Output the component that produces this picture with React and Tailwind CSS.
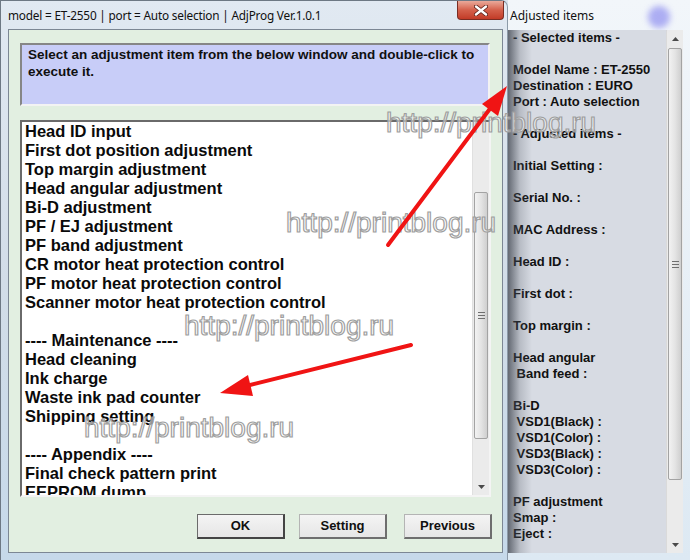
import React from 'react';

const listItems = [
  'Head ID input',
  'First dot position adjustment',
  'Top margin adjustment',
  'Head angular adjustment',
  'Bi-D adjustment',
  'PF / EJ adjustment',
  'PF band adjustment',
  'CR motor heat protection control',
  'PF motor heat protection control',
  'Scanner motor heat protection control',
  '',
  '---- Maintenance ----',
  'Head cleaning',
  'Ink charge',
  'Waste ink pad counter',
  'Shipping setting',
  '',
  '---- Appendix ----',
  'Final check pattern print',
  'EEPROM dump',
];

const adjusted = [
  '- Selected items -',
  '',
  'Model Name : ET-2550',
  'Destination : EURO',
  'Port : Auto selection',
  '',
  '- Adjusted items -',
  '',
  'Initial Setting :',
  '',
  'Serial No. :',
  '',
  'MAC Address :',
  '',
  'Head ID :',
  '',
  'First dot :',
  '',
  'Top margin :',
  '',
  'Head angular',
  ' Band feed :',
  '',
  'Bi-D',
  ' VSD1(Black) :',
  ' VSD1(Color) :',
  ' VSD3(Black) :',
  ' VSD3(Color) :',
  '',
  'PF adjustment',
  'Smap :',
  'Eject :',
];

function Grip() {
  return (
    <div className="flex flex-col gap-[2px] items-center">
      <div className="w-[7px] h-px bg-[#6f6f6f]" />
      <div className="w-[7px] h-px bg-[#6f6f6f]" />
      <div className="w-[7px] h-px bg-[#6f6f6f]" />
    </div>
  );
}

function Arrow({ up }) {
  return (
    <svg width="7" height="4" viewBox="0 0 7 4">
      {up ? <path d="M0 4 L3.5 0 L7 4 Z" fill="#4a4a4a" /> : <path d="M0 0 L7 0 L3.5 4 Z" fill="#4a4a4a" />}
    </svg>
  );
}

function Thumb({ className }) {
  return (
    <div className={`mx-[1px] rounded-[2px] border border-[#a3a3a3] bg-gradient-to-r from-[#f2f2f2] via-[#e4e4e4] to-[#cfcfcf] flex items-center justify-center ${className}`}>
      <Grip />
    </div>
  );
}

function Button({ children, primary, className = '' }) {
  return (
    <button
      className={`w-[88px] h-[25px] text-[13px] font-bold text-[#101010] bg-gradient-to-b from-[#f4f4f4] to-[#e6e6e6] border ${
        primary
          ? 'border-[#6b6b6b] border-b-2 border-r-2 border-b-[#444] border-r-[#444]'
          : 'border-[#b4b4b4] border-b-2 border-r-2 border-b-[#6e6e6e] border-r-[#6e6e6e]'
      } ${className}`}
    >
      {children}
    </button>
  );
}

const wm = 'absolute text-[28px] leading-[28px] text-[rgba(255,255,255,0.55)] [-webkit-text-stroke:1.2px_#9e9e9e] whitespace-nowrap';

export default function App() {
  return (
    <div className="relative w-[690px] h-[560px] overflow-hidden flex bg-[#d9e4ee] font-['Liberation_Sans',Arial,sans-serif]">
      {/* left dialog */}
      <div className="relative z-10 w-[508px] h-[560px] flex flex-col bg-gradient-to-b from-[#e1e9f2] via-[#d2dde8] to-[#c6d9ea] border-l border-t border-[#6d7884] rounded-tr-[7px] border-r border-r-[#8c9aa8]">
        <div className="h-[28px] flex items-start pl-[7px] relative">
          <span className="mt-[6px] text-[11.8px] text-[#101010] font-['Noto_Sans',sans-serif] tracking-[-0.2px]">
            model = ET-2550 | port = Auto selection | AdjProg Ver.1.0.1
          </span>
          <div className="ml-auto mr-[3px] w-[47px] h-[19px] rounded-b-[4px] border border-t-0 border-[#7a2c22] bg-gradient-to-b from-[#e9a99a] via-[#d4604b] to-[#c23a26] flex items-center justify-center">
            <svg width="14" height="11" viewBox="0 0 14 11">
              <path d="M2 1.5 L12 9.5 M12 1.5 L2 9.5" stroke="#5a1e16" strokeWidth="4" strokeLinecap="round" />
              <path d="M2 1.5 L12 9.5 M12 1.5 L2 9.5" stroke="#ffffff" strokeWidth="2.4" strokeLinecap="round" />
            </svg>
          </div>
        </div>

        <div className="ml-[7px] mr-[4px] h-[524px] border border-[#7c8794] bg-[#e2efe1] flex flex-col pl-[11px] pr-[10px]">
          <div className="mt-[13px] h-[63px] mr-[2px] border-2 border-t-[#868686] border-l-[#868686] border-b-[#f3f3f3] border-r-[#f3f3f3] bg-[#c8cdf8] pl-[6px] pr-[4px] pt-[2px] text-[13.5px] leading-[16.5px] font-bold text-[#101010]">
            Select an adjustment item from the below window and double-click to execute it.
          </div>

          <div className="mt-[14px] h-[377px] mr-[1px] border-2 border-t-[#6a6a6a] border-l-[#6a6a6a] border-b-[#f4f4f4] border-r-[#f4f4f4] bg-white flex">
            <div className="flex-1 overflow-hidden pl-[3px]">
              {listItems.map((t, i) => (
                <div key={i} className="h-[19px] text-[16.5px] leading-[19px] font-bold text-[#0a0a0a] whitespace-nowrap">
                  {t}
                </div>
              ))}
            </div>
            <div className="w-[17px] bg-[#ebebeb] border-l border-[#e0e0e0] flex flex-col">
              <Thumb className="mt-[70px] h-[247px]" />
              <div className="flex-1" />
              <div className="h-[17px] flex items-center justify-center">
                <Arrow />
              </div>
            </div>
          </div>

          <div className="mt-[17px] flex justify-end">
            <Button primary>OK</Button>
            <Button className="ml-[14px]">Setting</Button>
            <Button className="ml-[17px]">Previous</Button>
          </div>
        </div>
      </div>

      {/* right window */}
      <div className="relative flex-1 h-[560px] flex flex-col bg-gradient-to-b from-[#f2f6fa] to-[#dde9f3]">
        <div className="h-[30px] relative flex items-start">
          <span className="mt-[7px] ml-[2px] text-[12px] text-[#101010] font-['Noto_Sans',sans-serif]">Adjusted items</span>
          <div className="absolute left-[140px] top-[6px] w-[22px] h-[22px] rounded-full bg-[#8f8ff0] opacity-70 blur-[3px]" />
        </div>
        <div className="h-[523px] flex">
          <div className="relative w-[158px] bg-[#d7dbe3] pl-[5px] overflow-hidden">
            {adjusted.map((t, i) => (
              <div key={i} className="h-[16px] text-[13px] leading-[16px] font-bold text-[#111] whitespace-pre">
                {t}
              </div>
            ))}
            <div className="absolute left-0 top-0 bottom-0 w-[24px] bg-gradient-to-r from-[rgba(60,66,76,0.75)] via-[rgba(90,96,106,0.25)] to-transparent" />
          </div>
          <div className="w-[17px] bg-[#ebebeb] border-l border-[#dadada] flex flex-col">
            <div className="h-[17px] flex items-center justify-center">
              <Arrow up />
            </div>
            <Thumb className="mt-[1px] h-[432px]" />
            <div className="flex-1" />
            <div className="h-[17px] flex items-center justify-center">
              <Arrow />
            </div>
          </div>
        </div>
      </div>

      {/* watermarks */}
      <div className={`${wm} left-[386px] top-[109px] z-20`}>http://printblog.ru</div>
      <div className={`${wm} left-[286px] top-[209px] z-20`}>http://printblog.ru</div>
      <div className={`${wm} left-[184px] top-[312px] z-20`}>http://printblog.ru</div>
      <div className={`${wm} left-[84px] top-[414px] z-20`}>http://printblog.ru</div>

      {/* arrows */}
      <svg className="absolute inset-0 z-30 pointer-events-none" width="690" height="560">
        <path d="M388 245 L492 106" stroke="#f01414" strokeWidth="4" strokeLinecap="round" />
        <path d="M507 86 L498 116 L482 104 Z" fill="#f01414" />
        <path d="M411 345 L246 386" stroke="#f01414" strokeWidth="4" strokeLinecap="round" />
        <path d="M220 393 L248 375 L253 396 Z" fill="#f01414" />
      </svg>
    </div>
  );
}
